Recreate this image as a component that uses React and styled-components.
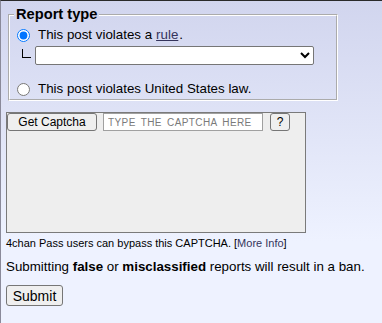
import React from "react";
import styled, { createGlobalStyle } from "styled-components";

const Global = createGlobalStyle`
  html, body { margin: 0; padding: 0; }
  body { font-family: Arial, "Liberation Sans", Helvetica, sans-serif; }
  * { box-sizing: border-box; }
`;

const Page = styled.div`
  min-height: 100vh;
  border-top: 1px solid #2a2a2a;
  border-left: 1px solid #8a8a9a;
  background: linear-gradient(#d1d5ee 0px, #eef2ff 240px, #eef2ff 100%);
  padding: 5px 5px 0 5px;
  font-family: Arial, "Liberation Sans", Helvetica, sans-serif;
  font-size: 13.333px;
  color: #000;
`;

const Fieldset = styled.fieldset`
  width: 330px;
  margin: 0 0 0 2px;
  border: 2px groove #fff;
  padding: 0 4px 2px 2px;
  min-width: 0;
`;

const Legend = styled.legend`
  font-weight: bold;
  font-size: 14.667px;
  line-height: 17px;
  padding: 0 2px;
  margin-left: 2px;
`;

const RadioRow = styled.label`
  display: flex;
  align-items: center;
  height: 16px;
  margin-top: ${(p) => p.$top}px;
  line-height: 16px;
`;

const Radio = styled.input`
  width: 13px;
  height: 13px;
  margin: 1px 8px 0 5px;
`;

const RuleLink = styled.a`
  color: #34345c;
  text-decoration: underline;
  margin: 0 1px 0 4px;
`;

const SelectRow = styled.div`
  display: flex;
  align-items: center;
  margin-top: 3px;
  height: 19px;
  padding-left: 10px;
`;

const Corner = styled.span`
  display: block;
  width: 9px;
  height: 9px;
  margin-top: -5px;
  margin-right: 4px;
  border-left: 1px solid #000;
  border-bottom: 1px solid #000;
`;

const Select = styled.select`
  width: 279px;
  height: 19px;
  margin: 0;
  background: #fff;
  border: 1px solid #767676;
  border-radius: 2px;
  font-family: Arial, "Liberation Sans", sans-serif;
  font-size: 13px;
`;

const CaptchaBox = styled.div`
  width: 300px;
  height: 121px;
  margin-top: 11px;
  background: #eeeeee;
  border: 1px solid #7a7a7a;
  display: flex;
  align-items: flex-start;
`;

const Btn = styled.button`
  height: ${(p) => p.$h || 18}px;
  width: ${(p) => p.$w}px;
  margin: 0 0 0 ${(p) => p.$ml || 0}px;
  padding: 0;
  background: #efefef;
  border: 1px solid #767676;
  border-radius: 3px;
  font-family: Arial, "Liberation Sans", sans-serif;
  font-size: ${(p) => p.$fs || 12}px;
  color: #000;
  line-height: 1;
`;

const CaptchaInput = styled.input`
  width: 160px;
  height: 18px;
  margin: 0 0 0 6px;
  padding: 0 0 0 4px;
  border: 1px solid #a0a0a0;
  background: #fff;
  font-family: Arial, "Liberation Sans", sans-serif;
  font-size: 10px;
  letter-spacing: 0.4px;
  word-spacing: 2px;
  &::placeholder { color: #7a7a7a; }
`;

const PassNote = styled.div`
  margin-top: 4px;
  font-size: 11px;
  line-height: 13px;
`;

const InfoLink = styled.a`
  color: #34345c;
  text-decoration: none;
`;

const Warning = styled.p`
  margin: 9px 0 0;
  font-size: 13.333px;
  line-height: 16px;
  white-space: nowrap;
`;

const SubmitRow = styled.div`
  margin-top: 10px;
`;

export default function App() {
  return (
    <>
      <Global />
      <Page>
        <Fieldset>
          <Legend>Report type</Legend>
          <RadioRow $top={4}>
            <Radio type="radio" name="cat" defaultChecked />
            <span>This post violates a</span>
            <RuleLink href="#">rule</RuleLink>
            <span>.</span>
          </RadioRow>
          <SelectRow>
            <Corner />
            <Select defaultValue="">
              <option value=""></option>
            </Select>
          </SelectRow>
          <RadioRow $top={16}>
            <Radio type="radio" name="cat" />
            <span>This post violates United States law.</span>
          </RadioRow>
        </Fieldset>
        <CaptchaBox>
          <Btn type="button" $w={90}>Get Captcha</Btn>
          <CaptchaInput placeholder="TYPE THE CAPTCHA HERE" />
          <Btn type="button" $w={20} $ml={7}>?</Btn>
        </CaptchaBox>
        <PassNote>
          4chan Pass users can bypass this CAPTCHA. [<InfoLink href="#">More Info</InfoLink>]
        </PassNote>
        <Warning>
          Submitting <b>false</b> or <b>misclassified</b> reports will result in a ban.
        </Warning>
        <SubmitRow>
          <Btn type="submit" $w={57} $h={21} $fs={14}>Submit</Btn>
        </SubmitRow>
      </Page>
    </>
  );
}
